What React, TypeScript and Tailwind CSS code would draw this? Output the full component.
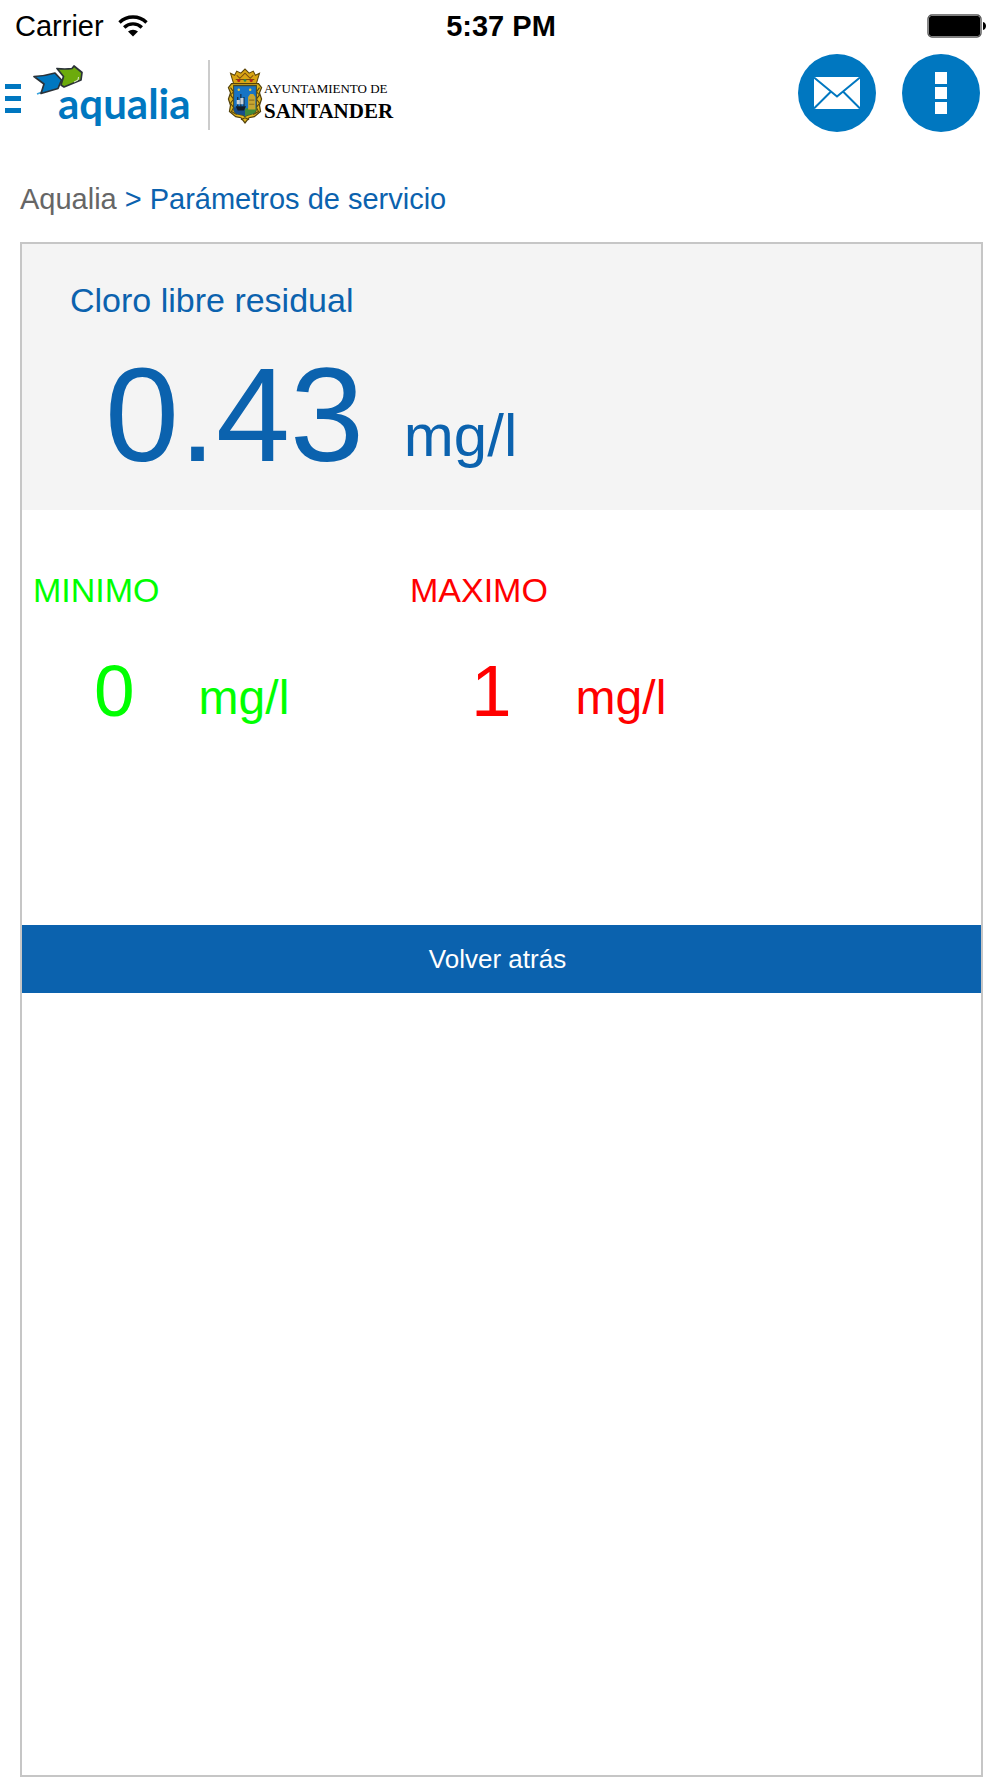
import React from "react";

type Limit = {
  label: string;
  value: string;
  unit: string;
  color: string;
};

const reading = { name: "Cloro libre residual", value: "0.43", unit: "mg/l" };

const limits: Limit[] = [
  { label: "MINIMO", value: "0", unit: "mg/l", color: "text-[#00ff00]" },
  { label: "MAXIMO", value: "1", unit: "mg/l", color: "text-[#ff0000]" },
];

//

const WifiIcon = () => (
  <svg width="30" height="22" viewBox="0 0 30 22" fill="none" stroke="#000">
    <path d="M1.5 7.4a19.5 19.5 0 0 1 27 0" strokeWidth="3.4" />
    <path d="M6.2 12.4a12.8 12.8 0 0 1 17.6 0" strokeWidth="3.4" />
    <path
      d="M10 16.6a7.4 7.4 0 0 1 10 0L15 21.6z"
      fill="#000"
      stroke="none"
    />
  </svg>
);

const BatteryIcon = () => (
  <svg width="60" height="24" viewBox="0 0 60 24">
    <rect
      x="1"
      y="1"
      width="53"
      height="22"
      rx="4"
      fill="#fff"
      stroke="#555"
      strokeWidth="1.4"
    />
    <rect x="2" y="2" width="51" height="20" rx="2.5" fill="#000" />
    <path d="M56 8c4 .8 4 7.2 0 8z" fill="#000" />
  </svg>
);

const StatusBar = () => (
  <div className="grid h-[50px] grid-cols-3 items-center pl-[15px] pr-[13px] text-[29px] leading-[52px] text-black">
    <div className="flex items-center gap-[14px]">
      <span>Carrier</span>
      <WifiIcon />
    </div>
    <span className="text-center font-bold">5:37 PM</span>
    <div className="flex justify-end">
      <BatteryIcon />
    </div>
  </div>
);

const AqualiaArrows = () => (
  <svg
    width="52"
    height="32"
    viewBox="0 0 52 32"
    className="absolute top-[2px] left-0"
    strokeLinejoin="round"
  >
    <path d="M4 29l8-3M26 18l6-2" stroke="#3aa3dc" strokeWidth="1.5" />
    <path
      d="M1 11.5Q12 11 22 8L28.500 15L25 23.5L8 28.500L11 19z"
      fill="#0077c0"
      stroke="#2b3238"
      strokeWidth="1.7"
    />
    <path
      d="M24 3.500Q32 4.500 39 3.500L41 1L49 7.500L48 15L31 22L28 20L30.500 11.500z"
      fill="#6cab0c"
      stroke="#2b3238"
      strokeWidth="1.7"
    />
    <path d="M41 17l4-2 .5-3" stroke="#dfe8d0" strokeWidth="1" fill="none" />
  </svg>
);

const Crest = () => (
  <svg width="38" height="58" viewBox="0 0 36 56">
    {/* crown */}
    <path
      d="M7 15L4 5l4 2 2-4 4 2 4-4 4 4 4-2 2 4 4-2-3 10z"
      fill="#d9a514"
      stroke="#5f4708"
      strokeWidth="1"
    />
    <path d="M9 11h18M10 7l3 3 5-5 5 5 3-3" stroke="#7a4a10" fill="none" />
    <circle cx="12" cy="12" r="1.5" fill="#b3221b" />
    <circle cx="24" cy="12" r="1.5" fill="#b3221b" />
    <circle cx="18" cy="12" r="1.3" fill="#2e8b42" />
    {/* frame */}
    <path
      d="M5 15h26l3 4-2 5 2 6-2 6 1 6-6 5-5 1-4 5-4-5-5-1-6-5 1-6-2-6 2-6-2-5z"
      fill="#e0b51c"
      stroke="#54430e"
      strokeWidth="1.2"
    />
    <path
      d="M4 19l3 4-3 3 3 4-3 4 3 4-2 4 5 3M32 19l-3 4 3 3-3 4 3 4-3 4 2 4-5 3M14 50l4-2 4 2"
      stroke="#54430e"
      strokeWidth="1"
      fill="none"
    />
    {/* shield */}
    <path
      d="M7 17h22v22q0 5-6 6-3 0-5 2-2-2-5-2-6-1-6-6z"
      fill="#1774c4"
      stroke="#4b4a22"
      strokeWidth="1"
    />
    <path d="M7 38h11v8q-3-1-5-1-6-1-6-6z" fill="#164e8d" />
    <path d="M18 39l11-1v1q0 5-6 6-3 0-5 2z" fill="#3f8b3a" />
    <path d="M21 28l2-3h3l2 3v12h-7z" fill="#c7a631" />
    <path d="M22 31h5M22 35h5" stroke="#8e7220" />
    <path d="M9 37h10l-2 4h-6z" fill="#141c26" />
    <path d="M11 28v9M14 25v12M17 28v9" stroke="#1b222c" />
    <path d="M10 31h3v4h-3zM13.500 29h3v6h-3z" fill="#c9d2da" />
    <circle cx="12" cy="21" r="1.2" fill="#e6cd4c" />
    <circle cx="23" cy="21" r="1.2" fill="#e6cd4c" />
  </svg>
);

const Header = () => (
  <header className="flex h-[86px] items-center justify-between pl-[5px] pr-5">
    <div className="flex items-center">
      <button
        aria-label="Abrir menú"
        className="mt-[10px] flex w-4 flex-col gap-[7px]"
      >
        <span className="h-[5px] bg-[#0077c0]" />
        <span className="h-[5px] bg-[#0077c0]" />
        <span className="h-[5px] bg-[#0077c0]" />
      </button>
      <a
        href="#inicio"
        className="relative ml-3 block h-[60px] w-[162px] pt-[12px] pl-[25px] font-['Lato',sans-serif] text-[42px] leading-[56px] font-bold text-[#0077c0]"
      >
        <AqualiaArrows />
        aqualia
      </a>
      <div className="mt-1 ml-[13px] h-[70px] w-[2px] bg-[#cccccc]" />
      <a href="#ayuntamiento" className="ml-4 flex items-center pt-2">
        <Crest />
        <span className="flex flex-col pt-2 font-['Liberation_Serif',serif] text-black">
          <span className="text-[13px] leading-[20px]">AYUNTAMIENTO DE</span>
          <span className="text-[21px] leading-[24px] font-bold">
            SANTANDER
          </span>
        </span>
      </a>
    </div>
    <div className="flex gap-[26px]">
      <button
        aria-label="Mensajes"
        className="flex size-[78px] items-center justify-center rounded-full bg-[#0077c0]"
      >
        <svg width="46" height="32" viewBox="0 0 46 32">
          <rect width="46" height="32" rx="1" fill="#fff" />
          <path
            d="M0 0.500L23 19.500L46 0.500M0 31.500L16.500 15M46 31.500L29.500 15"
            stroke="#0077c0"
            strokeWidth="2"
            fill="none"
          />
        </svg>
      </button>
      <button
        aria-label="Más opciones"
        className="flex size-[78px] flex-col items-center justify-center gap-[3px] rounded-full bg-[#0077c0]"
      >
        <span className="size-3 bg-white" />
        <span className="size-3 bg-white" />
        <span className="size-3 bg-white" />
      </button>
    </div>
  </header>
);

const LimitValue = ({ label, value, unit, color }: Limit) => (
  <div className={`w-[377px] ${color}`}>
    <h2 className="text-[34px] leading-[40px]">{label}</h2>
    <div className="mt-[41px] flex items-end gap-16 pl-[61px]">
      <span className="text-[73px] leading-[80px]">{value}</span>
      <span className="pb-[5px] text-[48px] leading-[56px]">{unit}</span>
    </div>
  </div>
);

const App = () => {
  return (
    <div className="flex min-h-screen flex-col bg-white font-['Liberation_Sans',Arial,sans-serif]">
      <StatusBar />
      <Header />
      <nav className="mt-[45px] flex gap-2 px-5 text-[29px] leading-[36px] text-[#0b62ae]">
        <a href="#aqualia" className="text-[#666666]">
          Aqualia
        </a>
        <span>&gt;</span>
        <span>Parámetros de servicio</span>
      </nav>
      <main className="mt-[25px] mr-[17px] mb-px ml-5 flex-1 border-2 border-[#c6c6c6]">
        <section className="bg-[#f4f4f4] pt-9 pb-7 text-[#0b62ae]">
          <h1 className="pl-12 text-[34px] leading-[40px]">{reading.name}</h1>
          <div className="mt-[29px] flex items-end gap-10 pl-[83px]">
            <span className="text-[133px] leading-[133px]">
              {reading.value}
            </span>
            <span className="pb-4 text-[60px] leading-[60px]">
              {reading.unit}
            </span>
          </div>
        </section>
        <section className="flex pt-15 pl-[11px]">
          {limits.map((limit) => (
            <LimitValue key={limit.label} {...limit} />
          ))}
        </section>
        <button className="mt-[194px] h-[68px] w-full bg-[#0b62ae] pr-2 text-[26px] text-white">
          Volver atrás
        </button>
      </main>
    </div>
  );
};

export default App;
